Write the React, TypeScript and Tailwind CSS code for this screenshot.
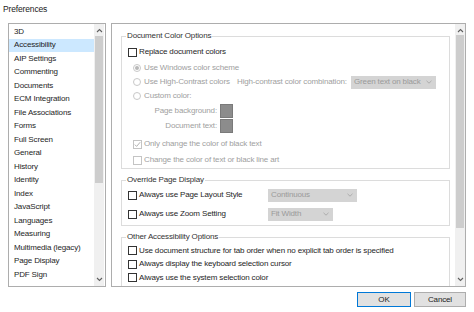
import React from "react";

const items = [
  "3D",
  "Accessibility",
  "AIP Settings",
  "Commenting",
  "Documents",
  "ECM Integration",
  "File Associations",
  "Forms",
  "Full Screen",
  "General",
  "History",
  "Identity",
  "Index",
  "JavaScript",
  "Languages",
  "Measuring",
  "Multimedia (legacy)",
  "Page Display",
  "PDF Sign",
];

function Arrow({ up }: { up?: boolean }) {
  return (
    <svg width="7" height="5" viewBox="0 0 7 5" className="block">
      <polyline
        points={up ? "1,4 3.5,1.5 6,4" : "1,1 3.5,3.5 6,1"}
        fill="none"
        stroke="#606060"
        strokeWidth="1.1"
      />
    </svg>
  );
}

function Scrollbar({ thumbTop, thumbHeight }: { thumbTop: number; thumbHeight: number }) {
  return (
    <div className="relative flex h-full w-[10px] flex-col items-center justify-between bg-[#f0f0f0] py-[4px]">
      <Arrow up />
      <div
        className="absolute left-[1px] right-[1px] bg-[#cdcdcd]"
        style={{ top: thumbTop, height: thumbHeight }}
      />
      <Arrow />
    </div>
  );
}

function Check({ disabled, checked }: { disabled?: boolean; checked?: boolean }) {
  return (
    <span
      className={
        "flex h-[9px] w-[9px] shrink-0 items-center justify-center border bg-white " +
        (disabled ? "border-[#c4c4c4]" : "border-[#333333]")
      }
    >
      {checked && (
        <svg width="7" height="7" viewBox="0 0 7 7">
          <polyline points="0.8,3.6 2.6,5.4 6.2,1.2" fill="none" stroke="#b0b0b0" strokeWidth="1" />
        </svg>
      )}
    </span>
  );
}

function Radio({ selected }: { selected?: boolean }) {
  return (
    <span className="flex h-[8px] w-[8px] shrink-0 items-center justify-center rounded-full border border-[#c8c8c8] bg-white">
      {selected && <span className="h-[4px] w-[4px] rounded-full bg-[#b8b8b8]" />}
    </span>
  );
}

function Select({ label, width }: { label: string; width: string }) {
  return (
    <div className={"flex h-[13px] shrink-0 items-center justify-between bg-[#d4d4d4] pl-[3px] pr-[4px] text-[#9a9a9a] " + width}>
      <span>{label}</span>
      <svg width="6" height="4" viewBox="0 0 6 4">
        <polyline points="0.5,0.8 3,3.2 5.5,0.8" fill="none" stroke="#a8a8a8" strokeWidth="0.9" />
      </svg>
    </div>
  );
}

function Group({ title, children, className }: { title: string; children: React.ReactNode; className?: string }) {
  return (
    <fieldset className={"w-[329px] border border-[#dcdcdc] " + (className ?? "")}>
      <legend className="ml-[4px] px-[1px] leading-[12px] text-[#333333]">{title}</legend>
      {children}
    </fieldset>
  );
}

export default function App() {
  return (
    <div
      className="h-[312px] w-[474px] overflow-hidden whitespace-nowrap bg-white text-[8px] tracking-[-0.15px] text-[#1e1e1e]"
      style={{ fontFamily: '"Liberation Sans", Arial, sans-serif' }}
    >
      <div className="h-[23px] pl-[3px] pt-[3px] text-[8.5px] leading-[12px] text-[#222]">Preferences</div>

      <div className="flex pl-[8px]">
        <div className="flex h-[264px] w-[98px] border border-[#adadad]">
          <div className="w-[85px] pt-[1px]">
            {items.map((it) => (
              <div
                key={it}
                className={
                  "flex h-[13.5px] items-center pl-[5px] " + (it === "Accessibility" ? "bg-[#cce8ff]" : "")
                }
              >
                {it}
              </div>
            ))}
          </div>
          <Scrollbar thumbTop={12} thumbHeight={147} />
        </div>

        <div className="ml-[5px] flex h-[264px] w-[355px] border border-[#adadad]">
          <div className="flex-1 overflow-hidden pl-[9px] pt-[6px]">
            <Group title="Document Color Options" className="pb-[1px]">
              <div className="flex flex-col pt-[3px]">
                <label className="flex h-[14px] items-center gap-[2px] pl-[6px]">
                  <Check />
                  <span>Replace document colors</span>
                </label>
                <div className="mt-[2px] flex h-[14px] items-center gap-[3px] pl-[11px] text-[#a0a0a0]">
                  <Radio selected />
                  <span>Use Windows color scheme</span>
                </div>
                <div className="flex h-[14px] items-center pl-[11px] text-[#a0a0a0]">
                  <div className="flex w-[104px] shrink-0 items-center gap-[3px]">
                    <Radio />
                    <span>Use High-Contrast colors</span>
                  </div>
                  <span className="w-[114px] shrink-0">High-contrast color combination:</span>
                  <Select label="Green text on black" width="w-[85px]" />
                </div>
                <div className="flex h-[14px] items-center gap-[3px] pl-[11px] text-[#a0a0a0]">
                  <Radio />
                  <span>Custom color:</span>
                </div>
                <div className="mt-[1px] flex h-[14px] items-center gap-[3px] text-[#a0a0a0]">
                  <span className="w-[95px] text-right">Page background:</span>
                  <span className="h-[14px] w-[13px] border border-[#7a7a7a] bg-[#8c8c8c]" />
                </div>
                <div className="mt-[1px] flex h-[14px] items-center gap-[3px] text-[#a0a0a0]">
                  <span className="w-[95px] text-right">Document text:</span>
                  <span className="h-[14px] w-[13px] border border-[#7a7a7a] bg-[#8c8c8c]" />
                </div>
                <div className="mt-[4px] flex h-[14px] items-center gap-[2px] pl-[11px] text-[#a0a0a0]">
                  <Check disabled checked />
                  <span>Only change the color of black text</span>
                </div>
                <div className="mt-[2px] flex h-[14px] items-center gap-[2px] pl-[11px] text-[#a0a0a0]">
                  <Check disabled />
                  <span>Change the color of text or black line art</span>
                </div>
              </div>
            </Group>

            <Group title="Override Page Display" className="mt-[5px] pb-[4px]">
              <div className="flex flex-col pt-[2px]">
                <div className="flex h-[14px] items-center pl-[6px]">
                  <label className="flex w-[140px] shrink-0 items-center gap-[2px]">
                    <Check />
                    <span>Always use Page Layout Style</span>
                  </label>
                  <Select label="Continuous" width="w-[89px]" />
                </div>
                <div className="mt-[5px] flex h-[14px] items-center pl-[6px]">
                  <label className="flex w-[140px] shrink-0 items-center gap-[2px]">
                    <Check />
                    <span>Always use Zoom Setting</span>
                  </label>
                  <Select label="Fit Width" width="w-[65px]" />
                </div>
              </div>
            </Group>

            <Group title="Other Accessibility Options" className="mt-[5px] pb-[4px]">
              <div className="flex flex-col pt-[1px]">
                <label className="flex h-[13.5px] items-center gap-[2px] pl-[6px]">
                  <Check />
                  <span>Use document structure for tab order when no explicit tab order is specified</span>
                </label>
                <label className="flex h-[13.5px] items-center gap-[2px] pl-[6px]">
                  <Check />
                  <span>Always display the keyboard selection cursor</span>
                </label>
                <label className="flex h-[13.5px] items-center gap-[2px] pl-[6px]">
                  <Check />
                  <span>Always use the system selection color</span>
                </label>
              </div>
            </Group>
          </div>
          <Scrollbar thumbTop={11} thumbHeight={193} />
        </div>
      </div>

      <div className="mt-[5px] flex justify-end gap-[3px] pr-[8px]">
        <button className="h-[15px] w-[54px] border border-[#0078d7] bg-[#e1e1e1] leading-[13px] text-[#222]">
          OK
        </button>
        <button className="h-[15px] w-[52px] border border-[#adadad] bg-[#e1e1e1] leading-[13px] text-[#222]">
          Cancel
        </button>
      </div>
    </div>
  );
}
